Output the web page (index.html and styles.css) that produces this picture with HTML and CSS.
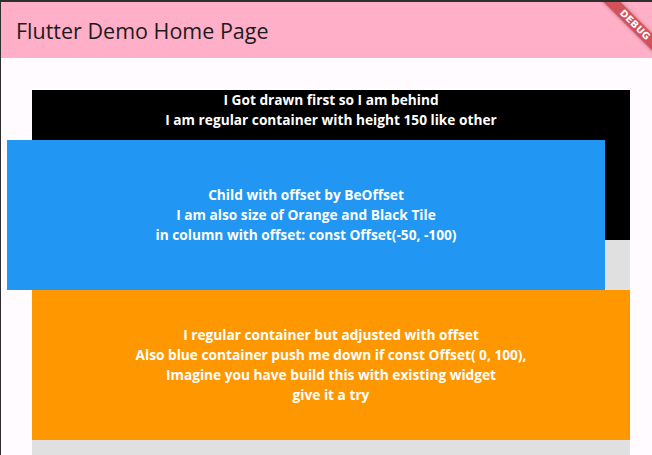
FILE: index.html
```html
<!DOCTYPE html>
<html>
<head>
<meta charset="utf-8">
<link rel="stylesheet" href="styles.css">
</head>
<body>
<div class="frame">
  <header class="appbar">
    <h1 class="title">Flutter Demo Home Page</h1>
  </header>
  <main class="content">
    <div class="column">
      <div class="tile tile-black">
        <p>I Got drawn first so I am behind</p>
        <p>I am regular container with height 150 like other</p>
      </div>
      <div class="tile tile-blue">
        <p>Child with offset by BeOffset</p>
        <p>I am also size of Orange and Black Tile</p>
        <p>in column with offset: const Offset(-50, -100)</p>
      </div>
      <div class="tile tile-orange">
        <p>I regular container but adjusted with offset</p>
        <p>Also blue container push me down if const Offset( 0, 100),</p>
        <p>Imagine you have build this with existing widget</p>
        <p>give it a try</p>
      </div>
    </div>
  </main>
  <div class="banner"><span>DEBUG</span></div>
</div>
</body>
</html>
```

FILE: styles.css
```css
html, body {
  margin: 0;
  padding: 0;
  background: #2e2e2e;
}
body {
  padding: 2px 0 0 1px;
  height: 455px;
  box-sizing: border-box;
  overflow: hidden;
}
.frame {
  position: relative;
  width: 651px;
  height: 453px;
  background: #fffbfe;
  overflow: hidden;
  font-family: "Open Sans", "Lato", sans-serif;
}
.appbar {
  height: 56px;
  background: #ffafc7;
  display: flex;
  align-items: center;
  padding-left: 15px;
}
.title {
  margin: 0;
  font-size: 21.5px;
  font-weight: 400;
  color: #1d1b20;
  letter-spacing: 0;
}
.content {
  padding: 32px 22px 0 31px;
}
.column {
  background: #e0e0e0;
  display: flex;
  flex-direction: column;
}
.tile {
  height: 150px;
  color: #ffffff;
  font-weight: 700;
  font-size: 13.7px;
  line-height: 20px;
  text-align: center;
  display: flex;
  flex-direction: column;
  align-items: center;
}
.tile p {
  margin: 0;
}
.tile-black {
  background: #000000;
  justify-content: flex-start;
}
.tile-blue {
  background: #2196f3;
  justify-content: center;
  transform: translate(-25px, -100px);
}
.tile-orange {
  background: #ff9800;
  justify-content: center;
  transform: translate(0, -100px);
}
.banner {
  position: absolute;
  left: 574px;
  top: 17px;
  width: 120px;
  height: 12px;
  background: rgba(183, 28, 28, 0.63);
  transform: rotate(45deg);
  display: flex;
  align-items: center;
  justify-content: center;
  box-shadow: 0 0 4px rgba(0, 0, 0, 0.3);
}
.banner span {
  color: #ffffff;
  font-family: "DejaVu Sans", sans-serif;
  font-weight: 900;
  font-size: 9.5px;
  letter-spacing: 0.3px;
  line-height: 12px;
}
```
